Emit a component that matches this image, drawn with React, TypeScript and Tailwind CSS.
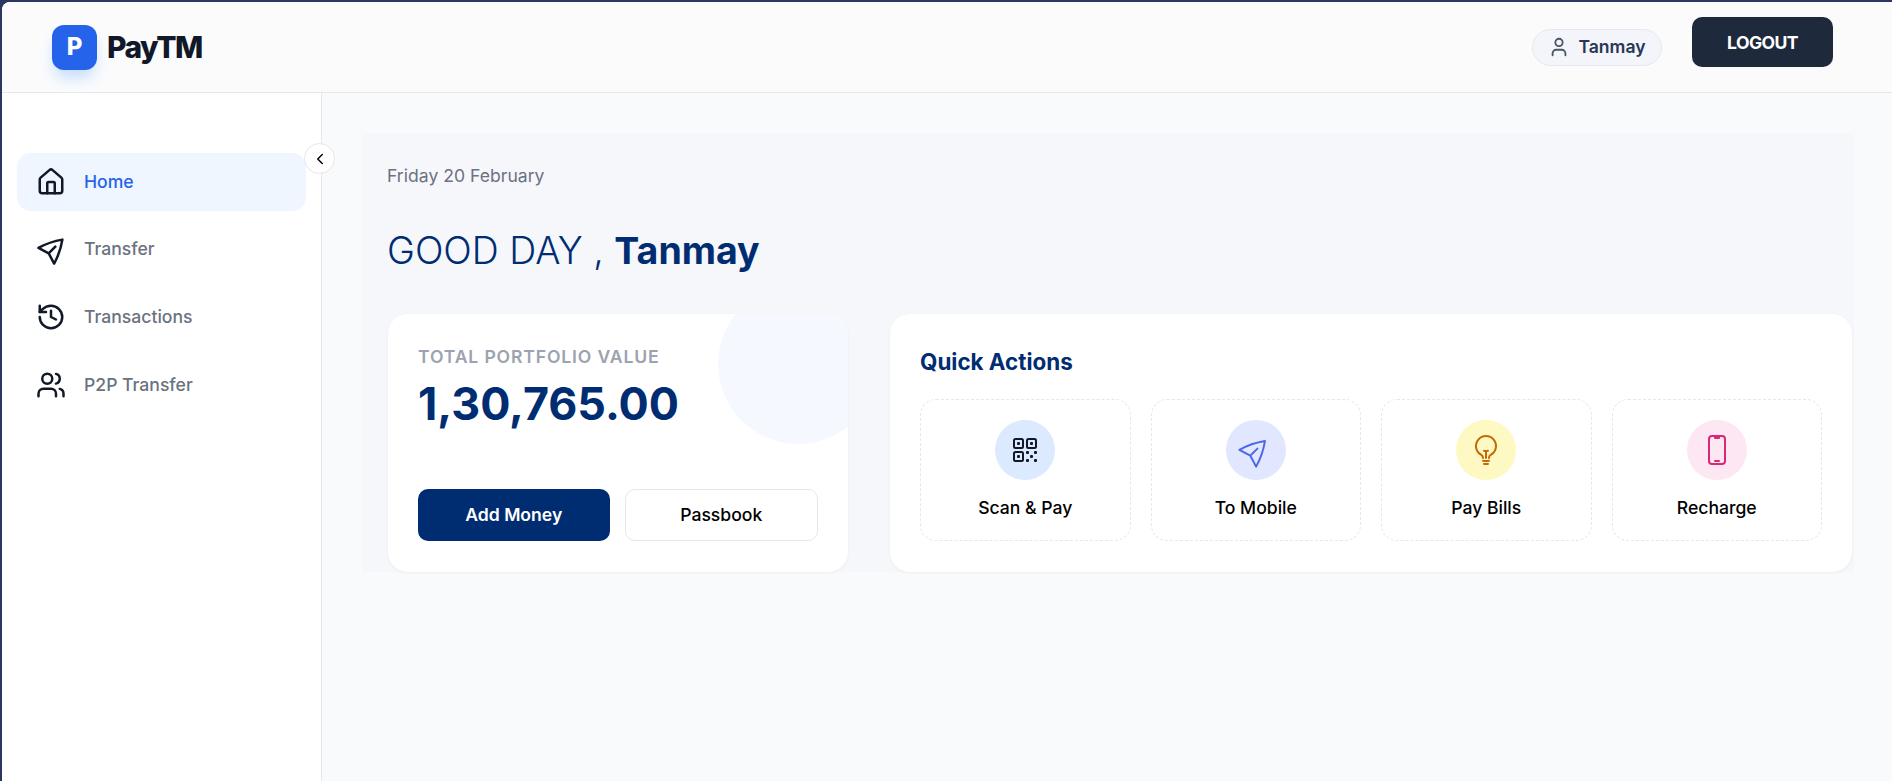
import { ChevronLeft, History, House, User, Users } from 'lucide-react'
import { HiOutlineDevicePhoneMobile, HiOutlineLightBulb, HiOutlinePaperAirplane, HiOutlineQrCode } from 'react-icons/hi2'

function TransferIcon() {
  return <HiOutlinePaperAirplane className="h-[30px] w-[30px] translate-x-[3px] -translate-y-[2px] -rotate-45 text-[#111827] [&_path]:stroke-[2]" />
}

const navItems = [
  { label: 'Home', icon: <House className="h-[30px] w-[30px] text-[#111827]" strokeWidth={2} />, active: true },
  { label: 'Transfer', icon: <TransferIcon /> },
  { label: 'Transactions', icon: <History className="h-[30px] w-[30px] text-[#111827]" strokeWidth={2} /> },
  { label: 'P2P Transfer', icon: <Users className="h-[30px] w-[30px] text-[#111827]" strokeWidth={2} /> },
]

const actions = [
  { label: 'Scan & Pay', icon: <HiOutlineQrCode className="h-[32px] w-[32px] text-[#111827]" />, circle: 'bg-[#dbeafe]' },
  { label: 'To Mobile', icon: <HiOutlinePaperAirplane className="h-[32px] w-[32px] -rotate-45 text-[#4f66e8]" />, circle: 'bg-[#e0e7ff]' },
  { label: 'Pay Bills', icon: <HiOutlineLightBulb className="h-[32px] w-[32px] text-[#c26a05]" />, circle: 'bg-[#fef9c3]' },
  { label: 'Recharge', icon: <HiOutlineDevicePhoneMobile className="h-[32px] w-[32px] text-[#db2777]" />, circle: 'bg-[#fce7f3]' },
]

export default function App() {
  return (
    <div className="h-[781px] overflow-hidden bg-[#2a3760] pt-[2px] pl-[2px] font-['Inter',sans-serif]">
      <div className="flex h-[779px] flex-col overflow-hidden rounded-tl-[8px] bg-[#f9fafb]">
        <header className="flex h-[91px] shrink-0 items-center justify-between border-b border-[#e5e7eb] bg-[#fbfbfc] pr-[59px] pl-[50px]">
          <div className="flex items-center gap-[10px]">
            <div className="flex h-[45px] w-[45px] items-center justify-center rounded-[12px] bg-[#2563eb] text-[24px] font-extrabold text-white shadow-[0_10px_15px_-3px_#bfdbfe]">
              P
            </div>
            <span className="text-[30px] font-extrabold tracking-[-1.5px] text-[#111827]">PayTM</span>
          </div>
          <div className="flex items-center gap-[30px]">
            <div className="flex h-[37px] w-[130px] items-center justify-center gap-[8px] rounded-full border border-[#e5e9f0] bg-[#f3f5fa]">
              <User className="h-[22px] w-[22px] text-[#4b5563]" />
              <span className="text-[17.6px] font-semibold text-[#2a3655]">Tanmay</span>
            </div>
            <button className="mb-[10px] h-[50px] w-[141px] rounded-[10px] bg-[#1e293b] pt-[2px] text-[17.6px] font-bold tracking-[-0.6px] text-white">
              LOGOUT
            </button>
          </div>
        </header>

        <div className="flex min-h-0 flex-1">
          <aside className="relative w-[320px] shrink-0 border-r border-[#e5e7eb] bg-white px-[15px] pt-[60px]">
            <button className="absolute top-[50px] -right-[14px] flex h-[31px] w-[31px] items-center justify-center rounded-full border border-[#e5e7eb] bg-white">
              <ChevronLeft className="h-[18px] w-[18px] text-black" />
            </button>
            <nav className="flex w-[289px] flex-col gap-[9.6px]">
              {navItems.map(item => (
                <div
                  key={item.label}
                  className={`flex h-[58px] items-center gap-[18px] rounded-[14px] pl-[19px] ${item.active ? 'bg-[#eff6ff] text-[#2563eb]' : 'text-[#6b7280]'}`}
                >
                  {item.icon}
                  <span className="text-[17.6px] font-medium">{item.label}</span>
                </div>
              ))}
            </nav>
          </aside>

          <main className="min-w-0 flex-1 pt-[40px] pr-[38px] pl-[40px]">
            <div className="bg-[#f6f7fb] pt-[30px] pr-[2px] pl-[25px]">
              <p className="text-[17.6px] text-[#6b7280]">Friday 20 February</p>
              <h1 className="mt-[34px] text-[37.5px] font-light text-[#002d72]">
                GOOD DAY , <span className="font-bold">Tanmay</span>
              </h1>
              <div className="mt-[34px] ml-[1px] flex gap-[42px]">
                <section className="relative h-[258px] w-[460px] shrink-0 overflow-hidden rounded-[20px] bg-white px-[30px] pt-[30px] shadow-[0_1px_3px_rgba(0,0,0,0.05)]">
                  <div className="absolute -top-[30px] -right-[30px] h-[160px] w-[160px] rounded-full bg-[#f5f9ff]" />
                  <p className="relative text-[17.6px] font-semibold tracking-[0.85px] text-[#9ca3af]">TOTAL PORTFOLIO VALUE</p>
                  <p className="relative mt-[4px] text-[44.8px] leading-[60px] font-bold text-[#002d72]">1,30,765.00</p>
                  <div className="relative mt-[55px] flex gap-[15px]">
                    <button className="h-[52px] flex-1 rounded-[10px] bg-[#002d72] text-[17.6px] font-semibold text-white">Add Money</button>
                    <button className="h-[52px] flex-1 rounded-[10px] border border-[#e5e7eb] bg-white text-[17.6px] font-medium text-black">Passbook</button>
                  </div>
                </section>
                <section className="h-[258px] min-w-0 flex-1 rounded-[20px] bg-white px-[30px] pt-[34px] shadow-[0_1px_3px_rgba(0,0,0,0.05)]">
                  <h2 className="text-[22.4px] leading-[28px] font-bold text-[#002d72]">Quick Actions</h2>
                  <div className="mt-[23px] grid grid-cols-4 gap-[20px]">
                    {actions.map(action => (
                      <div
                        key={action.label}
                        className="flex h-[142px] flex-col items-center rounded-[16px] border border-dashed border-[#e5e7eb] pt-[20px]"
                      >
                        <div className={`flex h-[60px] w-[60px] items-center justify-center rounded-full ${action.circle}`}>
                          {action.icon}
                        </div>
                        <span className="mt-[15px] text-[17.6px] font-medium text-black">{action.label}</span>
                      </div>
                    ))}
                  </div>
                </section>
              </div>
            </div>
          </main>
        </div>
      </div>
    </div>
  )
}
